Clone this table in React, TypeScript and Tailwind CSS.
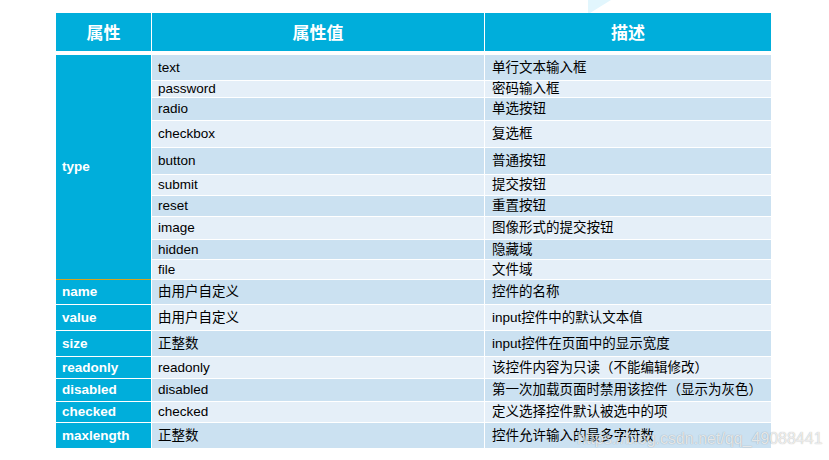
type Row = { value: string; desc: string };

const typeRows: Row[] = [
  { value: 'text', desc: '单行文本输入框' },
  { value: 'password', desc: '密码输入框' },
  { value: 'radio', desc: '单选按钮' },
  { value: 'checkbox', desc: '复选框' },
  { value: 'button', desc: '普通按钮' },
  { value: 'submit', desc: '提交按钮' },
  { value: 'reset', desc: '重置按钮' },
  { value: 'image', desc: '图像形式的提交按钮' },
  { value: 'hidden', desc: '隐藏域' },
  { value: 'file', desc: '文件域' },
];

const otherRows: (Row & { name: string })[] = [
  { name: 'name', value: '由用户自定义', desc: '控件的名称' },
  { name: 'value', value: '由用户自定义', desc: 'input控件中的默认文本值' },
  { name: 'size', value: '正整数', desc: 'input控件在页面中的显示宽度' },
  { name: 'readonly', value: 'readonly', desc: '该控件内容为只读（不能编辑修改）' },
  { name: 'disabled', value: 'disabled', desc: '第一次加载页面时禁用该控件（显示为灰色）' },
  { name: 'checked', value: 'checked', desc: '定义选择控件默认被选中的项' },
  { name: 'maxlength', value: '正整数', desc: '控件允许输入的最多字符数' },
];

const rowBg = (i: number) => (i % 2 === 0 ? 'bg-[#cbe1f1]' : 'bg-[#e5eff8]');

const Cell = ({ i, pad, children }: { i: number; pad: string; children: React.ReactNode }) => (
  <div className={`flex items-center leading-none text-black ${rowBg(i)} ${pad}`}>{children}</div>
);

const NameCell = ({ children }: { children: React.ReactNode }) => (
  <div className="flex items-center bg-[#00aedb] pl-[6px] font-bold leading-none text-white">{children}</div>
);

export default function App() {
  return (
    <div className="relative h-[460px] w-[829px] overflow-hidden bg-white font-['Liberation_Sans','Noto_Sans_CJK_SC',sans-serif] text-[13.5px]">
      <svg className="absolute left-[588px] top-0" width="23" height="13" viewBox="0 0 23 13">
        <polygon points="0,0 23,0 2,13 0,13" fill="#e2f6fd" />
      </svg>

      <div className="pl-[56px] pt-[13px]">
        {/* header */}
        <div className="grid h-[38px] grid-cols-[95px_332px_286px] gap-x-px">
          {['属性', '属性值', '描述'].map((h) => (
            <div
              key={h}
              className="flex items-center justify-center bg-[#00aedb] font-['Noto_Sans_CJK_SC',sans-serif] text-[17px] font-bold text-white"
            >
              {h}
            </div>
          ))}
        </div>

        {/* body */}
        <div className="mt-[4px] grid w-[714px] grid-cols-[95px_332px_286px] grid-rows-[25px_16px_22px_26px_26px_20px_20px_22px_19px_19px_24px_25px_25px_21px_22px_20px_25px] gap-px">
          <div className="row-span-10 flex items-center bg-[#00aedb] pl-[6px] font-bold text-white shadow-[0_1px_0_#d6a41e]">
            type
          </div>
          {typeRows.map((r, i) => (
            <div key={r.value} className="contents">
              <Cell i={i} pad="pl-[6px]">{r.value}</Cell>
              <Cell i={i} pad="pl-[7px]">{r.desc}</Cell>
            </div>
          ))}
          {otherRows.map((r, j) => {
            const i = j + typeRows.length;
            return (
              <div key={r.name} className="contents">
                <NameCell>{r.name}</NameCell>
                <Cell i={i} pad="pl-[6px]">{r.value}</Cell>
                <Cell i={i} pad="pl-[7px]">{r.desc}</Cell>
              </div>
            );
          })}
        </div>
      </div>

      <div className="absolute left-[577px] top-[431px] font-['Liberation_Sans',sans-serif] text-[16px] leading-none text-white/75 [text-shadow:0_0_1px_rgba(0,0,0,0.35)]">
        https://blog.csdn.net/qq_49088441
      </div>
    </div>
  );
}
